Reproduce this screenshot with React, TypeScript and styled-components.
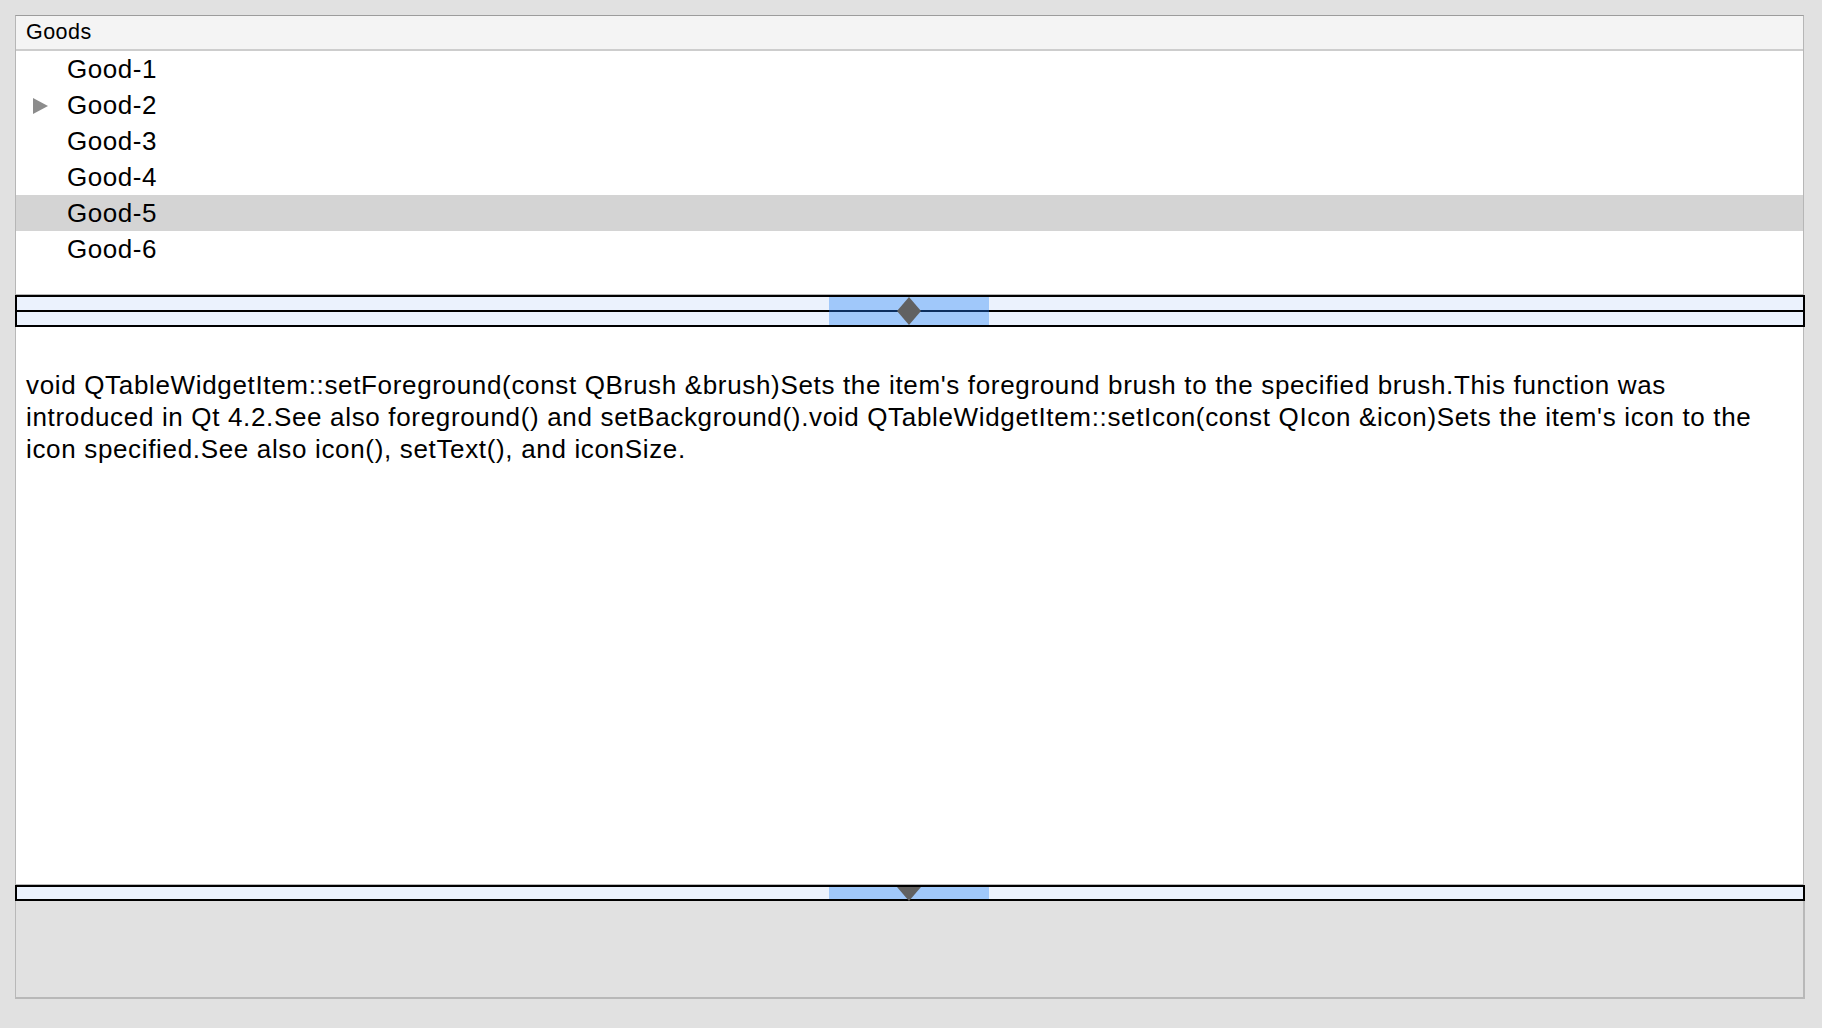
import React from "react";
import styled, { createGlobalStyle } from "styled-components";

const Global = createGlobalStyle`
  html, body {
    margin: 0;
    padding: 0;
    background: #e1e1e1;
    font-family: "Liberation Sans", Arial, Helvetica, sans-serif;
    color: #000;
  }
`;

const Frame = styled.div`
  display: flex;
  flex-direction: column;
  padding: 15px 0 0 15px;
  width: 1790px;
`;

const TreePanel = styled.div`
  box-sizing: border-box;
  width: 1789px;
  height: 280px;
  background: #fff;
  border: 1px solid #b6b6b6;
  border-top-color: #9c9c9c;
  display: flex;
  flex-direction: column;
`;

const Header = styled.div`
  height: 33px;
  background: #f4f4f4;
  border-bottom: 2px solid #cdcdcd;
  display: flex;
  align-items: center;
  padding-left: 10px;
  font-size: 21.5px;
  letter-spacing: 0.45px;
`;

const Row = styled.div<{ $selected?: boolean }>`
  position: relative;
  height: 36px;
  display: flex;
  align-items: center;
  padding-left: 51px;
  font-size: 26px;
  letter-spacing: 0.55px;
  background: ${(p) => (p.$selected ? "#d4d4d4" : "transparent")};
`;

const Arrow = styled.svg`
  position: absolute;
  left: 17px;
  top: 11px;
`;

const Handle = styled.div<{ $h: number }>`
  position: relative;
  box-sizing: border-box;
  width: 1790px;
  height: ${(p) => p.$h}px;
  border: 2px solid #000;
  background: #ebf2fd;
  display: flex;
  flex-direction: column;
  justify-content: center;
`;

const MidLine = styled.div`
  height: 2px;
  background: #000;
`;

const Grip = styled.div`
  position: absolute;
  left: 812px;
  top: 0;
  bottom: 0;
  width: 160px;
  background: #a0c8fa;
  display: flex;
  flex-direction: column;
  justify-content: center;
  align-items: center;
`;

const GripLine = styled.div`
  position: absolute;
  left: 0;
  right: 0;
  top: 50%;
  margin-top: -1px;
  height: 2px;
  background: #0c2e5e;
`;

const GripIcon = styled.svg`
  position: absolute;
  left: 68px;
`;

const TextPanel = styled.div`
  box-sizing: border-box;
  width: 1789px;
  height: 558px;
  background: #fff;
  border: 1px solid #b8b8b8;
  border-top: none;
  padding: 42px 0 0 10px;
  font-size: 26px;
  line-height: 32px;
  letter-spacing: 0.66px;
`;

const Line = styled.div`
  white-space: nowrap;
`;

const BottomPanel = styled.div`
  box-sizing: border-box;
  width: 1790px;
  height: 98px;
  background: #e1e1e1;
  border-left: 1px solid #b8b8b8;
  border-right: 2px solid #b8b8b8;
  border-bottom: 2px solid #b8b8b8;
`;

const goods = ["Good-1", "Good-2", "Good-3", "Good-4", "Good-5", "Good-6"];

const lines = [
  "void QTableWidgetItem::setForeground(const QBrush &brush)Sets the item's foreground brush to the specified brush.This function was",
  "introduced in Qt 4.2.See also foreground() and setBackground().void QTableWidgetItem::setIcon(const QIcon &icon)Sets the item's icon to the",
  "icon specified.See also icon(), setText(), and iconSize.",
];

export default function App() {
  return (
    <>
      <Global />
      <Frame>
        <TreePanel>
          <Header>Goods</Header>
          {goods.map((g, i) => (
            <Row key={g} $selected={i === 4}>
              {i === 1 && (
                <Arrow width="15" height="16" viewBox="0 0 15 16">
                  <polygon points="0,0 15,8 0,16" fill="#8c8c8c" />
                </Arrow>
              )}
              {g}
            </Row>
          ))}
        </TreePanel>
        <Handle $h={32}>
          <MidLine />
          <Grip>
            <GripLine />
            <GripIcon width="24" height="28" viewBox="0 0 24 28">
              <polygon points="12,0 24,14 12,28 0,14" fill="#616161" />
            </GripIcon>
          </Grip>
        </Handle>
        <TextPanel>
          {lines.map((l) => (
            <Line key={l}>{l}</Line>
          ))}
        </TextPanel>
        <Handle $h={16}>
          <Grip>
            <GripIcon width="24" height="14" viewBox="0 0 24 14" style={{ top: 0 }}>
              <polygon points="0,0 24,0 12,14" fill="#616161" />
            </GripIcon>
          </Grip>
        </Handle>
        <BottomPanel />
      </Frame>
    </>
  );
}
